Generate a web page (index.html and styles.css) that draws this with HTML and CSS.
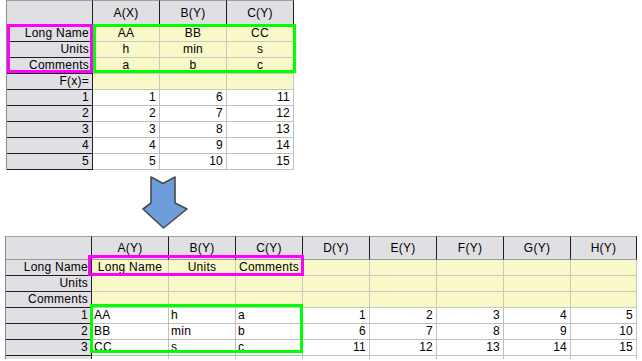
FILE: index.html
```html
<!DOCTYPE html>
<html>
<head>
<meta charset="utf-8">
<link rel="stylesheet" href="styles.css">
</head>
<body>
<div class="page">
  <div class="sheet sheet--top">
    <div class="cell corner"></div>
    <div class="cell colhead">A(X)</div>
    <div class="cell colhead">B(Y)</div>
    <div class="cell colhead">C(Y)</div>

    <div class="cell rowhead">Long Name</div>
    <div class="cell meta ctr">AA</div>
    <div class="cell meta ctr">BB</div>
    <div class="cell meta ctr">CC</div>

    <div class="cell rowhead">Units</div>
    <div class="cell meta ctr">h</div>
    <div class="cell meta ctr">min</div>
    <div class="cell meta ctr">s</div>

    <div class="cell rowhead">Comments</div>
    <div class="cell meta ctr">a</div>
    <div class="cell meta ctr">b</div>
    <div class="cell meta ctr">c</div>

    <div class="cell rowhead">F(x)=</div>
    <div class="cell meta"></div>
    <div class="cell meta"></div>
    <div class="cell meta"></div>

    <div class="cell rowhead">1</div>
    <div class="cell data num">1</div>
    <div class="cell data num">6</div>
    <div class="cell data num">11</div>

    <div class="cell rowhead">2</div>
    <div class="cell data num">2</div>
    <div class="cell data num">7</div>
    <div class="cell data num">12</div>

    <div class="cell rowhead">3</div>
    <div class="cell data num">3</div>
    <div class="cell data num">8</div>
    <div class="cell data num">13</div>

    <div class="cell rowhead">4</div>
    <div class="cell data num">4</div>
    <div class="cell data num">9</div>
    <div class="cell data num">14</div>

    <div class="cell rowhead">5</div>
    <div class="cell data num">5</div>
    <div class="cell data num">10</div>
    <div class="cell data num">15</div>

    <div class="box box--magenta box--top-labels"></div>
    <div class="box box--green box--top-values"></div>
  </div>

  <div class="arrow">
    <svg width="52" height="66" viewBox="0 0 52 66">
      <path d="M11 7 L23 13.5 L35 7 L35 33 L47 39 L23.5 58 L3 39 L11 33 Z" fill="#6d9edb" stroke="#4a4a4a" stroke-width="1.6" stroke-linejoin="round"/>
    </svg>
  </div>

  <div class="sheet sheet--bottom">
    <div class="cell corner"></div>
    <div class="cell colhead">A(Y)</div>
    <div class="cell colhead">B(Y)</div>
    <div class="cell colhead">C(Y)</div>
    <div class="cell colhead">D(Y)</div>
    <div class="cell colhead">E(Y)</div>
    <div class="cell colhead">F(Y)</div>
    <div class="cell colhead">G(Y)</div>
    <div class="cell colhead">H(Y)</div>

    <div class="cell rowhead">Long Name</div>
    <div class="cell meta ctr">Long Name</div>
    <div class="cell meta ctr">Units</div>
    <div class="cell meta ctr">Comments</div>
    <div class="cell meta"></div>
    <div class="cell meta"></div>
    <div class="cell meta"></div>
    <div class="cell meta"></div>
    <div class="cell meta"></div>

    <div class="cell rowhead">Units</div>
    <div class="cell meta"></div>
    <div class="cell meta"></div>
    <div class="cell meta"></div>
    <div class="cell meta"></div>
    <div class="cell meta"></div>
    <div class="cell meta"></div>
    <div class="cell meta"></div>
    <div class="cell meta"></div>

    <div class="cell rowhead">Comments</div>
    <div class="cell meta"></div>
    <div class="cell meta"></div>
    <div class="cell meta"></div>
    <div class="cell meta"></div>
    <div class="cell meta"></div>
    <div class="cell meta"></div>
    <div class="cell meta"></div>
    <div class="cell meta"></div>

    <div class="cell rowhead">1</div>
    <div class="cell data txt">AA</div>
    <div class="cell data txt">h</div>
    <div class="cell data txt">a</div>
    <div class="cell data num">1</div>
    <div class="cell data num">2</div>
    <div class="cell data num">3</div>
    <div class="cell data num">4</div>
    <div class="cell data num">5</div>

    <div class="cell rowhead">2</div>
    <div class="cell data txt">BB</div>
    <div class="cell data txt">min</div>
    <div class="cell data txt">b</div>
    <div class="cell data num">6</div>
    <div class="cell data num">7</div>
    <div class="cell data num">8</div>
    <div class="cell data num">9</div>
    <div class="cell data num">10</div>

    <div class="cell rowhead">3</div>
    <div class="cell data txt">CC</div>
    <div class="cell data txt">s</div>
    <div class="cell data txt">c</div>
    <div class="cell data num">11</div>
    <div class="cell data num">12</div>
    <div class="cell data num">13</div>
    <div class="cell data num">14</div>
    <div class="cell data num">15</div>

    <div class="cell rowhead stub"></div>
    <div class="cell data stub"></div>
    <div class="cell data stub"></div>
    <div class="cell data stub"></div>
    <div class="cell data stub"></div>
    <div class="cell data stub"></div>
    <div class="cell data stub"></div>
    <div class="cell data stub"></div>
    <div class="cell data stub"></div>

    <div class="box box--magenta box--bottom-labels"></div>
    <div class="box box--green box--bottom-values"></div>
  </div>
</div>
</body>
</html>
```

FILE: styles.css
```css
html, body {
  margin: 0;
  padding: 0;
  background: #ffffff;
}

body {
  font-family: "Liberation Sans", Arial, sans-serif;
  font-size: 12px;
  letter-spacing: 0.25px;
  color: #000000;
}

.page {
  display: flex;
  flex-direction: column;
  align-items: flex-start;
}

.sheet {
  position: relative;
  display: grid;
  border-left: 1px solid #8a8a8a;
}

.sheet--top {
  margin-left: 6px;
  grid-template-columns: 86px 67px 67px 67px;
  grid-template-rows: 26px repeat(9, 16px);
}

.sheet--bottom {
  margin-left: 5px;
  grid-template-columns: 86px 77px 67px 67px 67px 67px 67px 67px 66px;
  grid-template-rows: 24px repeat(6, 16px) 3px;
}

.cell {
  box-sizing: border-box;
  border-right: 1px solid #c0c0c0;
  border-bottom: 1px solid #c0c0c0;
  line-height: 15px;
  white-space: nowrap;
  overflow: hidden;
}

.corner,
.colhead {
  background: #e0dfe3;
  border-top: 1px solid #a0a0a0;
  border-right: 1px solid #1e1e1e;
  border-bottom: 1px solid #9a9a9a;
}

.sheet--top .corner,
.sheet--top .colhead {
  line-height: 24px;
}

.sheet--bottom .corner,
.sheet--bottom .colhead {
  line-height: 22px;
}

.colhead {
  text-align: center;
}

.rowhead {
  background: #e0dfe3;
  border-right: 1px solid #1e1e1e;
  border-bottom: 1px solid #1e1e1e;
  text-align: right;
  padding-right: 3px;
}

.meta {
  background: #f9f8c8;
  border-right-color: #c8c8c0;
  border-bottom-color: #c8c8c0;
}

.data {
  background: #ffffff;
}

.ctr { text-align: center; }
.num { text-align: right; padding-right: 3px; }
.txt { text-align: left; padding-left: 2px; }

.stub {
  border-bottom: none;
}

.arrow {
  margin-left: 140px;
  height: 66px;
}

.arrow svg {
  display: block;
}

.box {
  position: absolute;
  box-sizing: border-box;
  border: 3px solid;
  pointer-events: none;
}

.box--magenta { border-color: #ff00ff; }
.box--green { border-color: #00ff00; }

.box--top-labels {
  left: 0;
  top: 24px;
  width: 86px;
  height: 49px;
}

.box--top-values {
  left: 86px;
  top: 24px;
  width: 203px;
  height: 49px;
}

.box--bottom-labels {
  left: 82px;
  top: 19px;
  width: 216px;
  height: 21px;
}

.box--bottom-values {
  left: 84px;
  top: 68px;
  width: 213px;
  height: 49px;
}
```
